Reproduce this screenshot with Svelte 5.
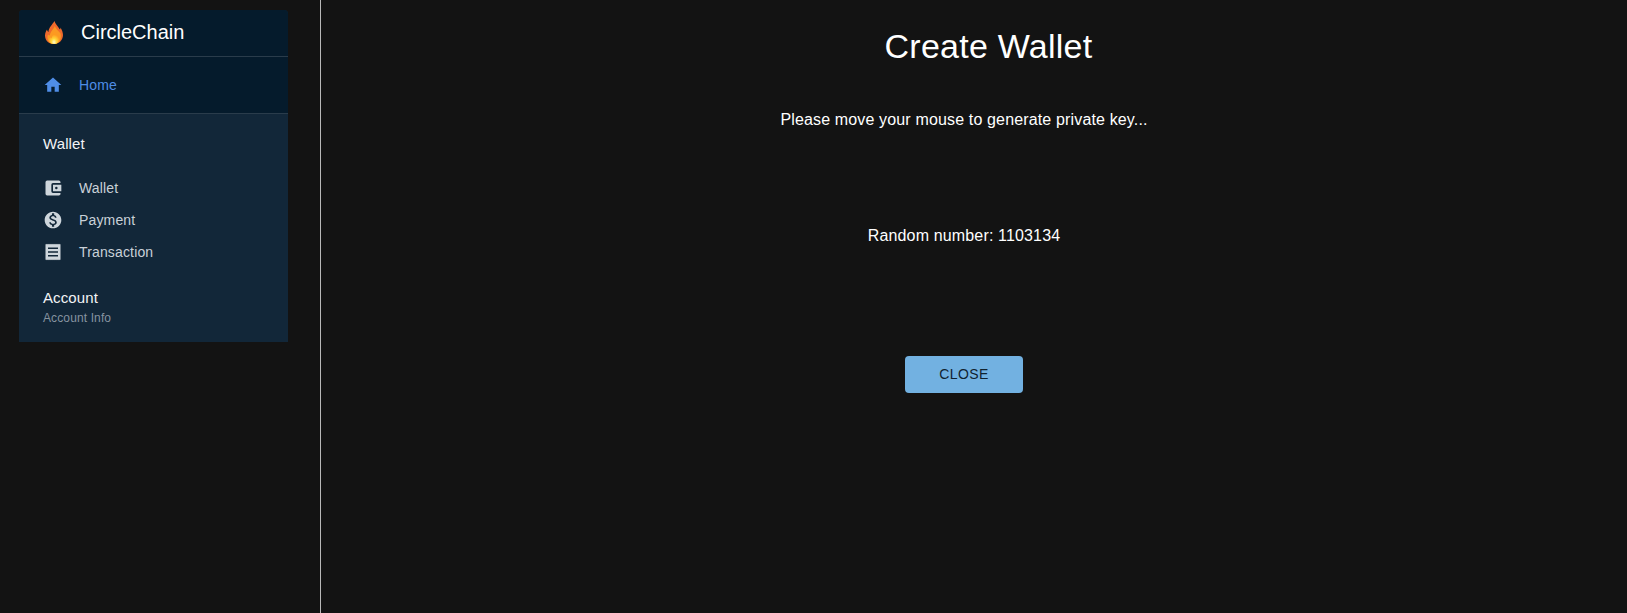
<script>
  const walletItems = [
    { name: "Wallet", icon: "M21 18v1c0 1.1-.9 2-2 2H5a2 2 0 0 1-2-2V5a2 2 0 0 1 2-2h14c1.1 0 2 .9 2 2v1h-9a2 2 0 0 0-2 2v8a2 2 0 0 0 2 2h9zm-9-2h10V8H12v8zm4-2.5a1.5 1.5 0 1 1 0-3 1.5 1.5 0 0 1 0 3z" },
    { name: "Payment", icon: "M12 2C6.48 2 2 6.48 2 12s4.48 10 10 10 10-4.48 10-10S17.52 2 12 2zm1.41 16.09V20h-2.67v-1.93c-1.71-.36-3.16-1.46-3.27-3.4h1.96c.1 1.05.82 1.87 2.65 1.87 1.96 0 2.4-.98 2.4-1.59 0-.83-.44-1.61-2.67-2.14-2.48-.6-4.18-1.62-4.18-3.67 0-1.72 1.39-2.84 3.11-3.21V4h2.67v1.95c1.86.45 2.79 1.86 2.85 3.39H14.3c-.05-1.11-.64-1.87-2.22-1.87-1.5 0-2.4.68-2.4 1.64 0 .84.65 1.39 2.67 1.91s4.18 1.39 4.18 3.91c-.01 1.83-1.38 2.83-3.12 3.16z" },
    { name: "Transaction", icon: "M20.4 3 19.200 2 18 3 16.800 2 15.600 3 14.400 2 13.200 3 12 2 10.800 3 9.600 2 8.400 3 7.200 2 6 3 4.800 2 3.600 3 3 2.500V21.500L3.600 21 4.800 22 6 21 7.200 22 8.400 21 9.600 22 10.800 21 12 22 13.200 21 14.400 22 15.600 21 16.800 22 18 21 19.200 22 20.400 21 21 21.500V2.500zM6 15.500h12v2H6zm0-4.500h12v2H6zm0-4.500h12v2H6z" }
  ];
  const home = "M10 20v-6h4v6h5v-8h3L12 3 2 12h3v8z";
</script>

<div class="page">
  <aside class="side">
    <nav class="menu">
      <div class="top">
        <div class="brand">
          <svg class="flame" viewBox="0 0 18 23" width="18" height="23">
            <defs>
              <radialGradient id="core" cx="50%" cy="85%" r="60%">
                <stop offset="0" stop-color="#fffbd0" />
                <stop offset="0.45" stop-color="#ffd93a" />
                <stop offset="1" stop-color="#ff9a1f" />
              </radialGradient>
            </defs>
            <path fill="#ef6a2c" d="M9.500 0C10 3 13 5 14.500 8 15.300 9 15.500 7.500 15.500 6.500 17 9 18 11.500 18 14 18 19 14 23 9 23 4 23 0 19.500 0 14.500 0 12 1 10 2 8.500 2.200 9.500 2.700 10.500 3.500 11 3.500 7 7 4 9.500 0Z" />
            <path fill="#fb9a22" d="M9.800 5C10.500 8 14 10 15.500 12.500 16.500 15 16 23 9 23 3 23 1.500 17 3 13.500 3.700 14.300 4.500 14.500 5 14.300 5 11 8.500 8.500 9.800 5Z" />
            <path fill="url(#core)" d="M9.500 10.500C10 13 14 15 14 18 14 21 12 23 9 23 6 23 4 21 4 18.500 4 16.500 5.500 15.500 6.500 17.500 6.800 15 9 13 9.500 10.500Z" />
          </svg>
          <span>CircleChain</span>
        </div>
        <a class="item home" href="/">
          <svg viewBox="0 0 24 24" width="20" height="20"><path d={home} /></svg>
          <span>Home</span>
        </a>
      </div>
      <div class="group">
        <h3>Wallet</h3>
        <ul>
          {#each walletItems as { name, icon }}
            <li>
              <a class="item" href="/">
                <svg viewBox="0 0 24 24" width="20" height="20"><path fill-rule="evenodd" d={icon} /></svg>
                <span>{name}</span>
              </a>
            </li>
          {/each}
        </ul>
        <h3 class="account">Account</h3>
        <p class="sub">Account Info</p>
      </div>
    </nav>
  </aside>
  <main class="content">
    <h1>Create Wallet</h1>
    <div class="dialog">
      <p class="hint">Please move your mouse to generate private key...</p>
      <p class="random">Random number: 1103134</p>
      <button>CLOSE</button>
    </div>
  </main>
</div>

<style>
  :global(body) {
    background: #131313;
    font-family: "Liberation Sans", Arial, sans-serif;
    color: #fff;
  }

  .page {
    display: flex;
    height: 613px;
    overflow: hidden;
  }

  .side {
    width: 321px;
    flex: none;
    box-sizing: border-box;
    border-right: 1px solid #b9b9b9;
    padding: 10px 0 0 19px;
  }

  .menu {
    width: 269px;
    border-radius: 4px 4px 0 0;
    overflow: hidden;
    background: #122739;
  }

  .top {
    background: #051b2c;
  }

  .brand {
    display: flex;
    align-items: center;
    gap: 18px;
    box-sizing: content-box;
    height: 44px;
    padding: 0 0 2px 26px;
    font-size: 20px;
    border-bottom: 1px solid #2a3c4b;
  }

  .item {
    display: flex;
    align-items: center;
    gap: 16px;
    height: 32px;
    padding-left: 24px;
    font-size: 14px;
    letter-spacing: 0.15px;
    color: #c9d1d8;
    text-decoration: none;
  }

  .item svg {
    fill: #ced6dc;
    flex: none;
  }

  .home {
    height: 56px;
    color: #4f8de6;
    border-bottom: 1px solid #2a3c4b;
  }

  .item.home svg {
    fill: #4f8de6;
  }

  .group {
    padding: 21px 0 16px;
  }

  h3 {
    margin: 0;
    padding-left: 24px;
    font-size: 15px;
    font-weight: 400;
    line-height: 18px;
    letter-spacing: 0.1px;
    color: #f2f4f6;
  }

  ul {
    list-style: none;
    margin: 19px 0 0;
    padding: 0;
  }

  .account {
    margin-top: 21px;
  }

  .sub {
    margin: 3px 0 0;
    padding-left: 24px;
    font-size: 12px;
    line-height: 16px;
    letter-spacing: 0.12px;
    color: #8693a0;
  }

  .content {
    flex: 1;
    padding-top: 26px;
    text-align: center;
  }

  h1 {
    margin: 0 0 0 29px;
    font-size: 34px;
    font-weight: 400;
    line-height: 40px;
    letter-spacing: 0.25px;
  }

  .dialog {
    width: 500px;
    margin-left: 393px;
    display: flex;
    flex-direction: column;
    align-items: center;
  }

  p {
    margin: 0;
  }

  .hint {
    margin-top: 44px;
    font-size: 16px;
    line-height: 20px;
    letter-spacing: 0.15px;
  }

  .random {
    margin-top: 96px;
    font-size: 16px;
    line-height: 20px;
    letter-spacing: 0.15px;
  }

  button {
    margin-top: 110px;
    width: 118px;
    height: 37px;
    padding: 0 0 2px;
    border: 0;
    border-radius: 4px;
    background: #72b1e1;
    color: #10222f;
    font-family: inherit;
    font-size: 14px;
    letter-spacing: 0.4px;
  }
</style>
